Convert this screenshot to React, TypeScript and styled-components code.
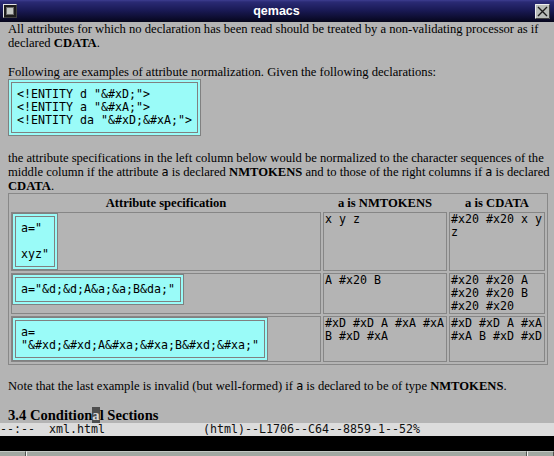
import React from "react";
import styled, { createGlobalStyle } from "styled-components";

const SERIF = `"Liberation Serif", "Times New Roman", serif`;
const MONO = `"DejaVu Sans Mono", "Liberation Mono", monospace`;
const SANS = `"Liberation Sans", Arial, sans-serif`;

const Global = createGlobalStyle`
  html, body { margin: 0; padding: 0; background: #b4b4b4; }
  body { width: 554px; height: 456px; overflow: hidden; }
  * { box-sizing: border-box; }
`;

const Window = styled.div`
  width: 554px;
  height: 456px;
  display: flex;
  flex-direction: column;
  overflow: hidden;
  background: #b4b4b4;
`;

const TitleBar = styled.div`
  flex: 0 0 22px;
  display: grid;
  grid-template-columns: 1fr auto 1fr;
  align-items: center;
  padding: 0 4px 0 3px;
  background: linear-gradient(
    to bottom,
    #3d3d90 0px,
    #2a2a74 2px,
    #1a1a56 10px,
    #06061c 22px
  );
`;

const Title = styled.div`
  font-family: ${SANS};
  font-weight: bold;
  font-size: 12.5px;
  color: #ffffff;
  line-height: 22px;
`;

const MenuButton = styled.div`
  justify-self: start;
  width: 14px;
  height: 14px;
  border: 1px solid;
  border-color: #e4e4e4 #404040 #404040 #e4e4e4;
  background: #1c1c1c;
  padding: 2px;
  display: flex;
`;

const MenuInner = styled.div`
  flex: 1;
  background: #c2c6c2;
  border: 1px solid #6a6a6a;
`;

const CloseButton = styled.div`
  justify-self: end;
  width: 15px;
  height: 15px;
  display: flex;
`;

const Content = styled.div`
  flex: 1 1 auto;
  overflow: hidden;
  padding: 0 0 0 8px;
  font-family: ${SERIF};
  font-size: 12.6px;
  line-height: 14px;
  color: #000;
`;

const Para = styled.p<{ $after?: number }>`
  margin: 0 0 ${(p) => p.$after ?? 0}px;
`;

const Code = styled.span`
  font-family: ${MONO};
  font-size: 11.63px;
`;

const CodeBox = styled.div<{ $after?: number }>`
  width: fit-content;
  border: 1px solid #808080;
  padding: 2px;
  background: #9afbf8;
  margin-bottom: ${(p) => p.$after ?? 0}px;
`;

const CodeInner = styled.pre`
  margin: 0;
  border: 1px solid #808080;
  padding: 5px;
  font-family: ${MONO};
  font-size: 11.63px;
  line-height: 13px;
  white-space: pre;
  color: #000;
`;

const Table = styled.div`
  width: 540px;
  border: 1px solid #888888;
  padding: 2px;
  display: grid;
  grid-template-columns: 310px 124px 96px;
  gap: 2px;
  margin-bottom: 14px;
`;

const HeadCell = styled.div`
  font-weight: bold;
  text-align: center;
  line-height: 14px;
  height: 14px;
  white-space: nowrap;
`;

const Cell = styled.div<{ $box?: boolean }>`
  border: 1px solid #868686;
  padding: ${(p) => (p.$box ? "0" : "0 0 0 1px")};
  font-family: ${MONO};
  font-size: 11.63px;
  line-height: 13px;
  min-width: 0;
  color: #000;
`;

const Heading = styled.h3`
  margin: 0;
  font-family: ${SERIF};
  font-weight: bold;
  font-size: 14.6px;
  line-height: 16px;
  white-space: nowrap;
`;

const Cursor = styled.span`
  background: #4e4e4e;
  color: #d8d8d8;
`;

const ModeLine = styled.div`
  flex: 0 0 13px;
  background: #dcdcdc;
  font-family: ${MONO};
  font-size: 11.63px;
  line-height: 13px;
  white-space: pre;
  color: #101010;
  overflow: hidden;
`;

const MiniBuffer = styled.div`
  flex: 0 0 15px;
  background: #000;
`;

const BottomStrip = styled.div`
  flex: 0 0 5px;
  display: grid;
  grid-template-columns: 26px 1fr 27px;
  background: #a2a8a2;
`;

const StripPart = styled.div<{ $first?: boolean }>`
  border-top: 1px solid #c4c8c4;
  border-left: ${(p) => (p.$first ? "0" : "1px solid #f0f0f0")};
  border-right: 1px solid #505450;
  background: #a2a8a2;
`;

const Bold = styled.b`
  font-weight: bold;
`;

function CloseIcon() {
  return (
    <svg width="15" height="15" viewBox="0 0 15 15">
      <rect x="0" y="0" width="15" height="15" fill="#b8bcb8" />
      <path d="M0.5 14.5V0.5H14.5" stroke="#eeeeee" fill="none" />
      <path d="M0.5 14.5H14.5V0.5" stroke="#404040" fill="none" />
      <path d="M3 3L12 12M12 3L3 12" stroke="#1a1a1a" strokeWidth="1.4" />
    </svg>
  );
}

export default function App() {
  return (
    <Window>
      <Global />
      <TitleBar>
        <MenuButton>
          <MenuInner />
        </MenuButton>
        <Title>qemacs</Title>
        <CloseButton>
          <CloseIcon />
        </CloseButton>
      </TitleBar>
      <Content>
        <Para $after={15}>
          All attributes for which no declaration has been read should be
          treated by a non-validating processor as if declared <Bold>CDATA</Bold>.
        </Para>
        <Para>
          Following are examples of attribute normalization. Given the following
          declarations:
        </Para>
        <CodeBox $after={15}>
          <CodeInner>{`<!ENTITY d "&#xD;">
<!ENTITY a "&#xA;">
<!ENTITY da "&#xD;&#xA;">`}</CodeInner>
        </CodeBox>
        <Para>
          the attribute specifications in the left column below would be
          normalized to the character sequences of the middle column if the
          attribute <Code>a</Code> is declared <Bold>NMTOKENS</Bold> and to
          those of the right columns if <Code>a</Code> is declared{" "}
          <Bold>CDATA</Bold>.
        </Para>
        <Table>
          <HeadCell>Attribute specification</HeadCell>
          <HeadCell>a is NMTOKENS</HeadCell>
          <HeadCell>a is CDATA</HeadCell>

          <Cell $box>
            <CodeBox>
              <CodeInner>{`a="

xyz"`}</CodeInner>
            </CodeBox>
          </Cell>
          <Cell>x y z</Cell>
          <Cell>#x20 #x20 x y z</Cell>

          <Cell $box>
            <CodeBox>
              <CodeInner>{`a="&d;&d;A&a;&a;B&da;"`}</CodeInner>
            </CodeBox>
          </Cell>
          <Cell>A #x20 B</Cell>
          <Cell>#x20 #x20 A #x20 #x20 B #x20 #x20</Cell>

          <Cell $box>
            <CodeBox>
              <CodeInner>{`a=
"&#xd;&#xd;A&#xa;&#xa;B&#xd;&#xa;"`}</CodeInner>
            </CodeBox>
          </Cell>
          <Cell>#xD #xD A #xA #xA B #xD #xA</Cell>
          <Cell>#xD #xD A #xA #xA B #xD #xD</Cell>
        </Table>
        <Para $after={14}>
          Note that the last example is invalid (but well-formed) if{" "}
          <Code>a</Code> is declared to be of type <Bold>NMTOKENS</Bold>.
        </Para>
        <Heading>
          3.4 Condition<Cursor>a</Cursor>l Sections
        </Heading>
      </Content>
      <ModeLine>{`--:--  xml.html              (html)--L1706--C64--8859-1--52%`}</ModeLine>
      <MiniBuffer />
      <BottomStrip>
        <StripPart $first />
        <StripPart />
        <StripPart />
      </BottomStrip>
    </Window>
  );
}
